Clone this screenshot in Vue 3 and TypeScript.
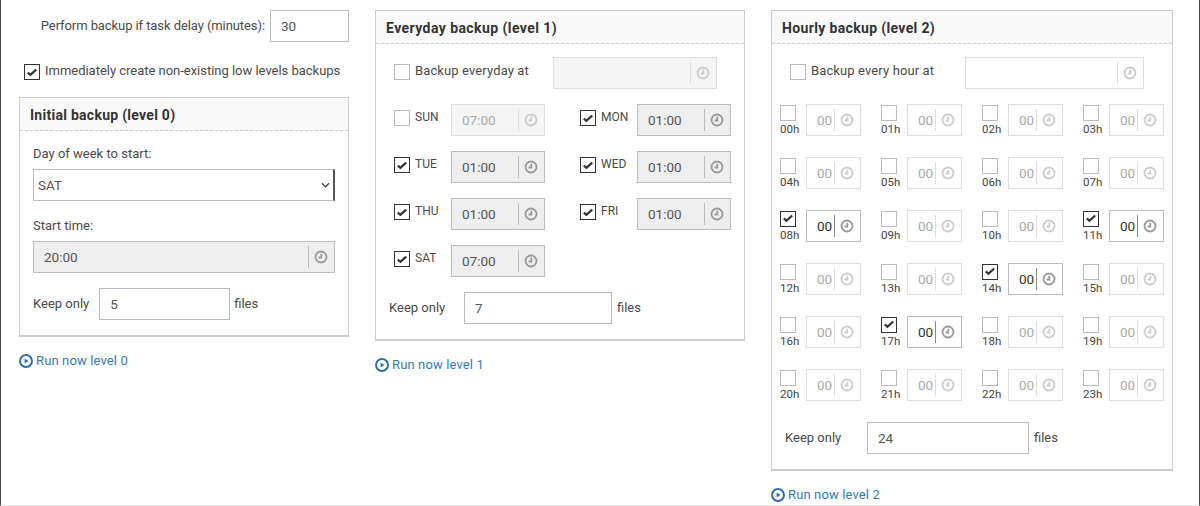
<script setup lang="ts">
interface Day { name: string; time: string; on: boolean }
const days: Day[] = [
  { name: 'SUN', time: '07:00', on: false },
  { name: 'MON', time: '01:00', on: true },
  { name: 'TUE', time: '01:00', on: true },
  { name: 'WED', time: '01:00', on: true },
  { name: 'THU', time: '01:00', on: true },
  { name: 'FRI', time: '01:00', on: true },
  { name: 'SAT', time: '07:00', on: true },
]
const activeHours = [8, 11, 14, 17]
const hours = Array.from({ length: 24 }, (_, i) => ({
  label: String(i).padStart(2, '0') + 'h',
  on: activeHours.includes(i),
}))
</script>

<template>
  <div class="page">
    <section class="col col-0">
      <div class="delay-row">
        <span class="delay-label">Perform backup if task delay (minutes):</span>
        <span class="field delay-input">30</span>
      </div>
      <label class="check-row immediate">
        <span class="box on"><svg viewBox="0 0 16 16"><path d="M3.2 8.6 6.2 11.2 12.8 5.2" /></svg></span>
        <span>Immediately create non-existing low levels backups</span>
      </label>
      <div class="panel panel-0">
        <h3 class="panel-head">Initial backup (level 0)</h3>
        <div class="panel-body body-0">
          <div class="lbl">Day of week to start:</div>
          <div class="field select">
            <span>SAT</span>
            <svg class="chev" viewBox="0 0 10 6"><path d="M1 1 5 5 9 1" /></svg>
          </div>
          <div class="lbl lbl-2">Start time:</div>
          <div class="time disabled wide">
            <span class="time-val">20:00</span>
            <span class="clock-wrap"><svg class="clock" viewBox="0 0 14 14"><circle cx="7" cy="7" r="5.5" /><path d="M7.3 3.8V7.5H4.6" /></svg></span>
          </div>
          <div class="keep keep-0">
            <span>Keep only</span>
            <span class="field k0">5</span>
            <span>files</span>
          </div>
        </div>
      </div>
      <a class="run">
        <svg viewBox="0 0 14 14"><circle cx="7" cy="7" r="6" /><path class="tri" d="M5.6 4.6 9.4 7 5.6 9.4Z" /></svg>
        Run now level 0
      </a>
    </section>

    <section class="col col-1">
      <div class="panel panel-1">
        <h3 class="panel-head">Everyday backup (level 1)</h3>
        <div class="panel-body body-1">
          <div class="all-row all-1">
            <label class="check-row">
              <span class="box"></span>
              <span>Backup everyday at</span>
            </label>
            <div class="time off-empty w164">
              <span class="time-val"></span>
              <span class="clock-wrap"><svg class="clock" viewBox="0 0 14 14"><circle cx="7" cy="7" r="5.5" /><path d="M7.3 3.8V7.5H4.6" /></svg></span>
            </div>
          </div>
          <div class="days">
            <div v-for="d in days" :key="d.name" class="day">
              <span class="box" :class="{ on: d.on }"><svg v-if="d.on" viewBox="0 0 16 16"><path d="M3.2 8.6 6.2 11.2 12.8 5.2" /></svg></span>
              <span class="day-name">{{ d.name }}</span>
              <div class="time w94" :class="d.on ? 'disabled' : 'off'">
                <span class="time-val">{{ d.time }}</span>
                <span class="clock-wrap"><svg class="clock" viewBox="0 0 14 14"><circle cx="7" cy="7" r="5.5" /><path d="M7.3 3.8V7.5H4.6" /></svg></span>
              </div>
            </div>
          </div>
          <div class="keep keep-1">
            <span class="keep-label-1">Keep only</span>
            <span class="field k1">7</span>
            <span>files</span>
          </div>
        </div>
      </div>
      <a class="run">
        <svg viewBox="0 0 14 14"><circle cx="7" cy="7" r="6" /><path class="tri" d="M5.6 4.6 9.4 7 5.6 9.4Z" /></svg>
        Run now level 1
      </a>
    </section>

    <section class="col col-2">
      <div class="panel panel-2">
        <h3 class="panel-head">Hourly backup (level 2)</h3>
        <div class="panel-body body-2">
          <div class="all-row all-2">
            <label class="check-row">
              <span class="box"></span>
              <span>Backup every hour at</span>
            </label>
            <div class="time blank w179">
              <span class="time-val"></span>
              <span class="clock-wrap"><svg class="clock" viewBox="0 0 14 14"><circle cx="7" cy="7" r="5.5" /><path d="M7.3 3.8V7.5H4.6" /></svg></span>
            </div>
          </div>
          <div class="hours">
            <div v-for="h in hours" :key="h.label" class="hour">
              <div class="hour-check">
                <span class="box" :class="{ on: h.on }"><svg v-if="h.on" viewBox="0 0 16 16"><path d="M3.2 7.4 6.2 10 12.8 4" /></svg></span>
                <span class="hour-name">{{ h.label }}</span>
              </div>
              <div class="time w55" :class="h.on ? 'live' : 'blank'">
                <span class="time-val">00</span>
                <span class="clock-wrap"><svg class="clock" viewBox="0 0 14 14"><circle cx="7" cy="7" r="5.5" /><path d="M7.3 3.8V7.5H4.6" /></svg></span>
              </div>
            </div>
          </div>
          <div class="keep keep-2">
            <span class="keep-label-2">Keep only</span>
            <span class="field k2">24</span>
            <span>files</span>
          </div>
        </div>
      </div>
      <a class="run">
        <svg viewBox="0 0 14 14"><circle cx="7" cy="7" r="6" /><path class="tri" d="M5.6 4.6 9.4 7 5.6 9.4Z" /></svg>
        Run now level 2
      </a>
    </section>
  </div>
</template>

<style>
html, body { margin: 0; background: #fff; }
</style>

<style scoped>
.page {
  display: flex;
  align-items: flex-start;
  gap: 26px;
  width: 1200px;
  height: 506px;
  box-sizing: border-box;
  padding: 10px 0 0 18px;
  overflow: hidden;
  background: #fff;
  color: #4a4a4a;
  font: 13px/18px Roboto, "Liberation Sans", sans-serif;
  border-left: 1px solid #444;
  border-right: 1px solid #444;
  border-bottom: 1px solid #e5e5e5;
}
.col { flex: none; }
.col-0 { width: 330px; }
.col-1 { width: 370px; }
.col-2 { width: 402px; }

.field {
  display: flex;
  align-items: center;
  box-sizing: border-box;
  height: 32px;
  padding: 0 10px;
  border: 1px solid #bbb;
  background: #fff;
  font-size: 13.5px;
  color: #555;
}

.delay-row { display: flex; align-items: center; justify-content: flex-end; gap: 5px; height: 32px; }
.delay-label { letter-spacing: -0.08px; }
.delay-input { width: 79px; }
.immediate { margin: 22px 0 0 5px; letter-spacing: -0.02px; }

.check-row { display: flex; align-items: flex-start; gap: 5px; line-height: 14px; }
.box {
  display: block;
  flex: none;
  box-sizing: border-box;
  width: 16px;
  height: 16px;
  border: 1px solid #bbb;
  background: #fff;
}
.box.on { border-color: #333; }
.box svg { display: block; width: 14px; height: 14px; fill: none; stroke: #333; stroke-width: 2.6; }

.panel {
  box-sizing: border-box;
  border: 1px solid #ccc;
  border-bottom-width: 2px;
  background: #fff;
}
.panel-0 { margin-top: 17px; height: 240px; }
.panel-1 { height: 331px; }
.panel-2 { height: 461px; }
.panel-head {
  margin: 0;
  box-sizing: border-box;
  height: 33px;
  padding: 8px 10px 0;
  background: #f9f9f9;
  border-bottom: 1px dashed #ccc;
  font-size: 14px;
  line-height: 18px;
  font-weight: 700;
  letter-spacing: 0.35px;
  color: #333;
}
.panel-0 .panel-head { letter-spacing: 0.27px; }
.panel-1 .panel-head { letter-spacing: 0.43px; }

.lbl { line-height: 18px; }
.body-0 { padding: 14px 13px 0; }
.select { margin-top: 6px; width: 302px; padding: 0 3px 0 4px; justify-content: space-between; border-right: 2px solid #555; }
.chev { width: 9px; height: 6px; fill: none; stroke: #444; stroke-width: 1.4; }
.lbl-2 { margin-top: 16px; }
.wide { width: 302px; margin-top: 6px; }

.time {
  display: flex;
  align-items: center;
  box-sizing: border-box;
  height: 32px;
  border: 1px solid #bbb;
  font-size: 13.5px;
  color: #555;
}
.time-val { flex: 1; min-width: 0; padding-left: 10px; }
.clock-wrap {
  flex: none;
  display: flex;
  align-items: center;
  justify-content: center;
  box-sizing: border-box;
  width: 26px;
  height: 22px;
  padding-right: 1px;
  border-left: 1px solid #bbb;
}
.clock { width: 14px; height: 14px; fill: none; stroke: #999; stroke-width: 1.8; }
.disabled { background: #eee; }
.off { background: #f5f5f5; border-color: #ddd; color: #aaa; }
.off .clock-wrap { border-color: #ddd; }
.off .clock { stroke: #ccc; }
.off-empty { background: #f5f5f5; border-color: #ddd; }
.off-empty .clock-wrap { border-color: #ddd; }
.off-empty .clock { stroke: #ccc; }
.blank { background: #fff; border-color: #ddd; color: #aaa; }
.blank .clock-wrap { border-color: #ddd; }
.blank .clock { stroke: #ccc; }
.live { background: #fff; border-color: #bbb; color: #333; }
.live .clock-wrap { border-color: #888; }

.keep { display: flex; align-items: center; gap: 5px; height: 32px; }
.keep-0 { margin-top: 15px; gap: 10px; }
.keep-0 .k0 { width: 131px; margin-right: -6px; }
.keep-1 { margin: 0 0 0 13px; }
.keep-1 .k1 { width: 148px; }
.keep-label-1 { width: 70px; }
.keep-2 { margin: 0 0 0 13px; }
.keep-2 .k2 { width: 162px; }
.keep-label-2 { width: 77px; }

.all-row { display: flex; align-items: flex-start; justify-content: space-between; padding: 13px 0 0 18px; }
.all-1 { width: 323px; }
.all-2 { width: 354px; }
.all-row .check-row { margin-top: 7px; letter-spacing: 0.12px; }
.w164 { width: 164px; }
.w179 { width: 179px; }

.days {
  display: grid;
  grid-template-columns: 186px 151px;
  row-gap: 15px;
  margin: 15px 0 15px 18px;
}
.day { display: flex; align-items: flex-start; }
.day > .box { margin-top: 6px; }
.day-name { width: 36px; margin-left: 5px; font-size: 12px; line-height: 16px; margin-top: 5px; }
.w94 { width: 94px; }

.hours {
  display: grid;
  grid-template-columns: repeat(4, 101px);
  row-gap: 21px;
  margin: 15px 0 21px 8px;
}
.hour { display: flex; align-items: flex-start; gap: 10px; }
.hour-check { width: 16px; margin-top: 1px; }
.hour-name { display: block; width: 22px; height: 13px; font-size: 11.5px; line-height: 13px; margin-top: 2px; color: #444; }
.w55 { width: 55px; }

.run {
  display: flex;
  align-items: center;
  gap: 3px;
  margin-top: 15px;
  color: #337ab7;
  line-height: 18px;
  font-size: 13px;
  letter-spacing: 0.13px;
}
.run svg { flex: none; width: 14px; height: 14px; fill: none; stroke: #2e6da4; stroke-width: 1.9; }
.run .tri { fill: #2e6da4; stroke: none; }
</style>
